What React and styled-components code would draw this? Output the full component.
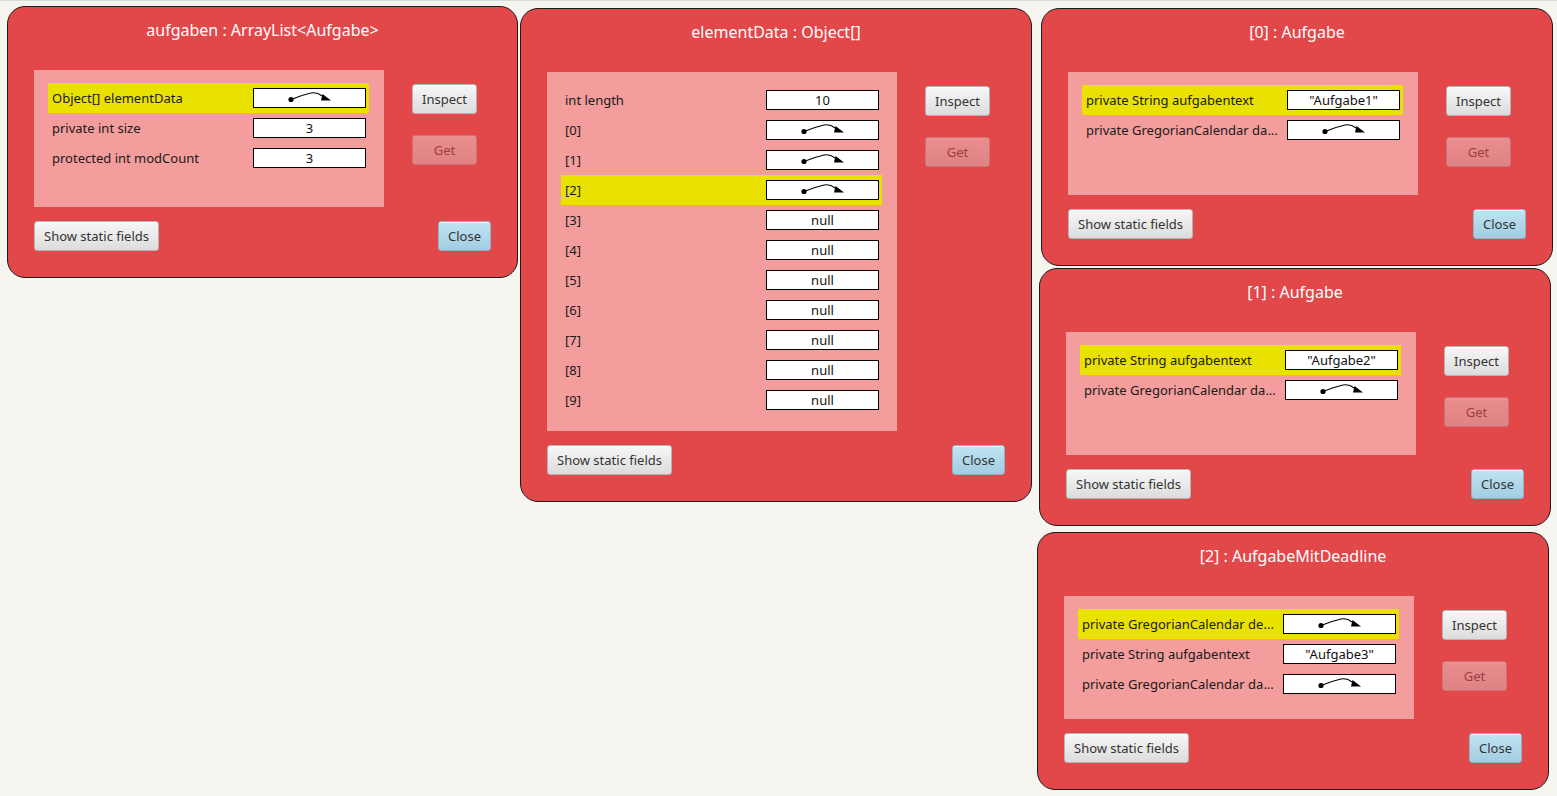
import React from 'react'
import styled, { createGlobalStyle, css } from 'styled-components'

const GlobalStyle = createGlobalStyle`
  html, body {
    margin: 0;
    padding: 0;
    background: #f6f5f0;
  }
  body {
    font-family: "Noto Sans", "Open Sans", sans-serif;
    width: 1557px;
    height: 796px;
    overflow: hidden;
  }
`

const inspectors = [
    {
        id: 'list', title: 'aufgaben : ArrayList<Aufgabe>', left: 7, top: 5, width: 511, height: 272,
        fields: [
            { label: 'Object[] elementData', ref: true, selected: true },
            { label: 'private int size', value: '3' },
            { label: 'protected int modCount', value: '3' },
        ]
    },
    {
        id: 'array', title: 'elementData : Object[]', left: 520, top: 7, width: 512, height: 494,
        fields: [
            { label: 'int length', value: '10' },
            { label: '[0]', ref: true },
            { label: '[1]', ref: true },
            { label: '[2]', ref: true, selected: true },
            { label: '[3]', value: 'null' },
            { label: '[4]', value: 'null' },
            { label: '[5]', value: 'null' },
            { label: '[6]', value: 'null' },
            { label: '[7]', value: 'null' },
            { label: '[8]', value: 'null' },
            { label: '[9]', value: 'null' },
        ]
    },
    {
        id: 'a0', title: '[0] : Aufgabe', left: 1041, top: 7, width: 512, height: 258,
        fields: [
            { label: 'private String aufgabentext', value: '"Aufgabe1"', selected: true },
            { label: 'private GregorianCalendar da...', ref: true },
        ]
    },
    {
        id: 'a1', title: '[1] : Aufgabe', left: 1039, top: 267, width: 512, height: 258,
        fields: [
            { label: 'private String aufgabentext', value: '"Aufgabe2"', selected: true },
            { label: 'private GregorianCalendar da...', ref: true },
        ]
    },
    {
        id: 'a2', title: '[2] : AufgabeMitDeadline', left: 1037, top: 531, width: 512, height: 258,
        fields: [
            { label: 'private GregorianCalendar de...', ref: true, selected: true },
            { label: 'private String aufgabentext', value: '"Aufgabe3"' },
            { label: 'private GregorianCalendar da...', ref: true },
        ]
    },
]

// object reference: dot, curved line, arrow head
const RefArrow = () => (
    <svg width="48" height="14" viewBox="0 0 48 14">
        <circle cx="5" cy="8.5" r="2.6" fill="#000" />
        <path d="M5 8.5 Q 16 4, 25 2 Q 31 0.8, 36 5" fill="none" stroke="#000" strokeWidth="1.1" />
        <polygon points="45,9.5 36.5,3 35,9.5" fill="#000" />
    </svg>
)

const Inspector = ({ data }) => (
    <Window style={{ left: data.left, top: data.top, width: data.width, height: data.height }}>
        <Title>{data.title}</Title>
        <Body>
            <FieldPanel>
                {data.fields.map((f, i) => (
                    <FieldRow key={i} $selected={f.selected}>
                        <FieldLabel>{f.label}</FieldLabel>
                        <ValueBox>{f.ref ? <RefArrow /> : f.value}</ValueBox>
                    </FieldRow>
                ))}
            </FieldPanel>
            <SideButtons>
                <Button>Inspect</Button>
                <Button disabled>Get</Button>
            </SideButtons>
        </Body>
        <Footer>
            <Button>Show static fields</Button>
            <Button $primary>Close</Button>
        </Footer>
    </Window>
)

const App = () => {
    return (
        <Desktop>
            <GlobalStyle />
            {inspectors.map(d => <Inspector key={d.id} data={d} />)}
        </Desktop>
    )
}

const Desktop = styled.div`
    position: relative;
    width: 1557px;
    height: 796px;
    border-top: 1px solid #d9d9d6;
    box-sizing: border-box;
    background: #f6f5f0;
`

const Window = styled.section`
    position: absolute;
    box-sizing: border-box;
    display: flex;
    flex-direction: column;
    padding: 0 26px 26px;
    background: #e2474a;
    border: 1.5px solid #1c1c1c;
    border-radius: 18px;
`

const Title = styled.h2`
    margin: 12px 0 29px;
    height: 22px;
    line-height: 22px;
    text-align: center;
    font-size: 16px;
    font-weight: normal;
    color: #fff;
`

const Body = styled.div`
    flex: 1;
    display: flex;
    gap: 28px;
    min-height: 0;
`

const FieldPanel = styled.div`
    width: 350px;
    box-sizing: border-box;
    padding: 13px 15px 0 14px;
    background: #f39d9c;
`

const FieldRow = styled.div`
    display: flex;
    align-items: center;
    height: 30px;
    padding: 0 3px 0 4px;
    background: ${({ $selected }) => ($selected ? '#e9e100' : 'transparent')};
`

const FieldLabel = styled.span`
    flex: 1;
    min-width: 0;
    white-space: nowrap;
    overflow: hidden;
    font-size: 13px;
    color: #1a1a1a;
`

const ValueBox = styled.div`
    width: 113px;
    height: 20px;
    box-sizing: border-box;
    display: flex;
    align-items: center;
    justify-content: center;
    background: #fff;
    border: 1px solid #000;
    font-size: 13px;
    color: #111;
`

const SideButtons = styled.div`
    display: flex;
    flex-direction: column;
    gap: 21px;
    padding-top: 14px;
    width: 65px;
`

const Button = styled.button`
    height: 30px;
    padding: 0 9px;
    font-family: inherit;
    font-size: 13px;
    color: #333;
    border: 1px solid #b4b4b4;
    border-radius: 3px;
    background: linear-gradient(#f7f7f7, #dcdcdc);
    box-shadow: inset 0 1px 0 rgba(255, 255, 255, 0.7);
    white-space: nowrap;

    &:disabled {
        opacity: 0.4;
    }

    ${({ $primary }) => $primary && css`
        border-color: #8fb3c6;
        background: linear-gradient(#c0e3f2, #a2cde1);
    `}
`

const Footer = styled.div`
    display: flex;
    justify-content: space-between;
    margin-top: 14px;
    height: 30px;
`

export default App
